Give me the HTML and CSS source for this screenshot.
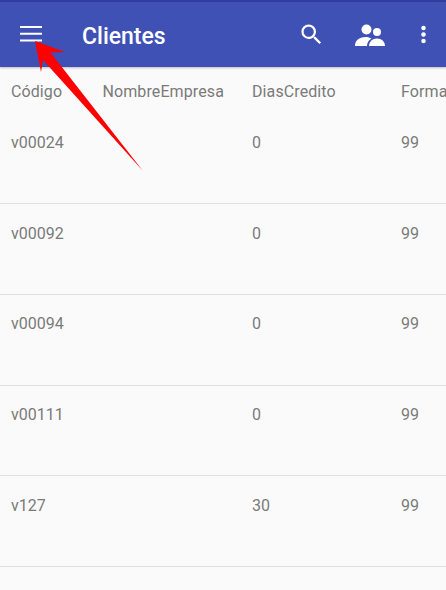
FILE: index.html
```html
<!DOCTYPE html>
<html lang="es">
<head>
<meta charset="utf-8">
<title>Clientes</title>
<link rel="stylesheet" href="styles.css">
</head>
<body>
<div class="screen">
  <div class="status"></div>
  <header class="appbar">
    <svg class="ic menu" viewBox="0 0 22 16"><path d="M0 0h22v2H0zM0 6.800h22v2H0zM0 13.500h22v2H0z"/></svg>
    <h1 class="title">Clientes</h1>
    <div class="actions">
      <svg class="ic search" viewBox="0 0 24 24"><path d="M15.5 14h-.79l-.28-.27A6.47 6.47 0 0 0 16 9.5 6.5 6.5 0 1 0 9.5 16c1.61 0 3.09-.59 4.23-1.57l.27.28v.79l5 4.99L20.49 19l-4.99-5zm-6 0C7.01 14 5 11.99 5 9.5S7.01 5 9.5 5 14 7.01 14 9.5 11.99 14 9.5 14z"/></svg>
      <svg class="ic people" viewBox="0 0 32 24"><circle cx="12.5" cy="6.5" r="5"/><circle cx="23" cy="9" r="4"/><path d="M1 23c0-5.500 4-9 10.500-9 2.500 0 4.500.6 6 1.500C14.500 17 13 20 13 23z"/><path d="M15 23c0-4.500 3.500-7.500 8-7.500s8 3 8 7.500z"/></svg>
      <svg class="ic dots" viewBox="0 0 8 24"><circle cx="4" cy="4.500" r="2.600"/><circle cx="4" cy="12" r="2.600"/><circle cx="4" cy="19.500" r="2.600"/></svg>
    </div>
  </header>
  <main class="table">
    <div class="row head"><span>Código</span><span>NombreEmpresa</span><span>DiasCredito</span><span>Forma</span></div>
    <div class="row"><span>v00024</span><span></span><span>0</span><span>99</span></div>
    <div class="row"><span>v00092</span><span></span><span>0</span><span>99</span></div>
    <div class="row"><span>v00094</span><span></span><span>0</span><span>99</span></div>
    <div class="row"><span>v00111</span><span></span><span>0</span><span>99</span></div>
    <div class="row"><span>v127</span><span></span><span>30</span><span>99</span></div>
  </main>
  <svg class="arrow" viewBox="0 0 446 590"><path d="M35 41 65 52 50.500 52.500 143 171 43 60 41 72z"/></svg>
</div>
</body>
</html>
```
FILE: styles.css
```css
* { box-sizing: border-box; }
html, body { margin: 0; padding: 0; }
body { font-family: Roboto, "Liberation Sans", sans-serif; background: #fafafa; }
.screen { position: relative; width: 446px; height: 590px; overflow: hidden; background: #fafafa; }
.status { height: 2px; background: #303f9f; }
.appbar {
  height: 65px;
  background: #3f51b5;
  display: flex;
  align-items: center;
  padding: 0 19px 0 20px;
  color: #fff;
  box-shadow: 0 1px 2px rgba(0,0,0,.25);
}
.ic { fill: #fff; display: block; }
.menu { width: 22px; height: 16px; margin-bottom: 1px; }
.title { margin: 4px 0 0 40px; font-size: 23px; font-weight: 500; flex: 1; }
.actions { display: flex; align-items: center; }
.search { width: 27px; height: 27px; }
.people { width: 32px; height: 24px; margin-left: 29px; }
.dots { width: 7px; height: 21px; margin-left: 34px; }
.table { display: block; }
.row {
  display: grid;
  grid-template-columns: 91.5px 149.5px 149px 1fr;
  padding: 19.5px 0 0 11px;
  height: 90.75px;
  font-size: 16px;
  line-height: 19px;
  color: #7a7a7a;
  border-bottom: 1.5px solid #e0e0e0;
  white-space: nowrap;
}
.row.head { height: 46.25px; border-bottom: 0; padding-top: 15px; letter-spacing: .1px; }
.arrow { position: absolute; left: 0; top: 0; width: 446px; height: 590px; fill: #ff0000; pointer-events: none; }
```
